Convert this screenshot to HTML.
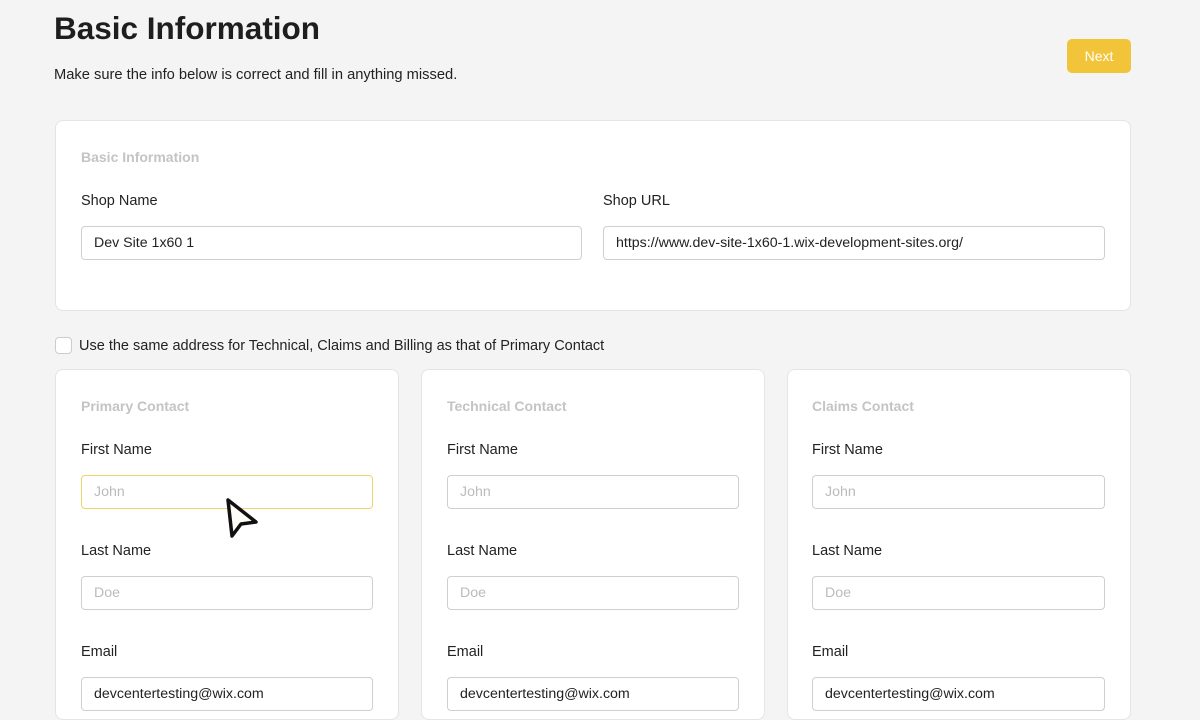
<!DOCTYPE html><html><head><style>
*{box-sizing:border-box;margin:0;padding:0}
html,body{width:1200px;height:720px;overflow:hidden}
body{background:#f4f4f4;font-family:"Liberation Sans",sans-serif;color:#222;position:relative}
.a{position:absolute}
.card{position:absolute;background:#fff;border:1px solid #e4e4e4;border-radius:8px}
.h{position:absolute;font-size:14px;font-weight:bold;color:#c4c4c4}
.l{position:absolute;font-size:14.5px;color:#222}
.i{position:absolute;height:34px;border:1px solid #cfcfcf;border-radius:4px;background:#fff;font-size:14.2px;padding:0 12px;line-height:32px;color:#222}
.p{color:#bbb}
</style></head><body>
<div class="a" style="left:54px;top:10px;font-size:31.5px;font-weight:bold;color:#1e1e1e">Basic Information</div>
<div class="a" style="left:54px;top:67px;font-size:14.7px;color:#222">Make sure the info below is correct and fill in anything missed.</div>
<div class="a" style="left:1067px;top:39px;width:64px;height:34px;background:#f2c43a;border-radius:5px;color:#fff;font-size:14px;text-align:center;line-height:34px">Next</div>
<div class="card" style="left:55px;top:120px;width:1076px;height:191px"></div>
<div class="h" style="left:81px;top:149px">Basic Information</div>
<div class="l" style="left:81px;top:193px">Shop Name</div>
<div class="l" style="left:603px;top:193px">Shop URL</div>
<div class="i" style="left:81px;top:226px;width:501px">Dev Site 1x60 1</div>
<div class="i" style="left:603px;top:226px;width:502px">https://www.dev-site-1x60-1.wix-development-sites.org/</div>
<div class="a" style="left:55px;top:337px;width:17px;height:17px;border:1px solid #ccc;border-radius:4px;background:#fff"></div>
<div class="l" style="left:79px;top:338px">Use the same address for Technical, Claims and Billing as that of Primary Contact</div>

<div class="card" style="left:55px;top:369px;width:344px;height:351px"></div>
<div class="card" style="left:421px;top:369px;width:344px;height:351px"></div>
<div class="card" style="left:787px;top:369px;width:344px;height:351px"></div>

<div class="h" style="left:81px;top:398px">Primary Contact</div>
<div class="h" style="left:447px;top:398px">Technical Contact</div>
<div class="h" style="left:812px;top:398px">Claims Contact</div>

<div class="l" style="left:81px;top:442px">First Name</div>
<div class="l" style="left:447px;top:442px">First Name</div>
<div class="l" style="left:812px;top:442px">First Name</div>
<div class="i p" style="left:81px;top:475px;width:292px;border-color:#ecd66a">John</div>
<div class="i p" style="left:447px;top:475px;width:292px">John</div>
<div class="i p" style="left:812px;top:475px;width:293px">John</div>

<div class="l" style="left:81px;top:543px">Last Name</div>
<div class="l" style="left:447px;top:543px">Last Name</div>
<div class="l" style="left:812px;top:543px">Last Name</div>
<div class="i p" style="left:81px;top:576px;width:292px">Doe</div>
<div class="i p" style="left:447px;top:576px;width:292px">Doe</div>
<div class="i p" style="left:812px;top:576px;width:293px">Doe</div>

<div class="l" style="left:81px;top:644px">Email</div>
<div class="l" style="left:447px;top:644px">Email</div>
<div class="l" style="left:812px;top:644px">Email</div>
<div class="i" style="left:81px;top:677px;width:292px">devcentertesting@wix.com</div>
<div class="i" style="left:447px;top:677px;width:292px">devcentertesting@wix.com</div>
<div class="i" style="left:812px;top:677px;width:293px">devcentertesting@wix.com</div>

<svg class="a" style="left:222px;top:494px" width="40" height="48" viewBox="0 0 40 48"><path d="M6 6 L10 42 L19 30 L34 28 Z" fill="#fffef6" stroke="#111" stroke-width="3.5" stroke-linejoin="round"/></svg>
</body></html>
